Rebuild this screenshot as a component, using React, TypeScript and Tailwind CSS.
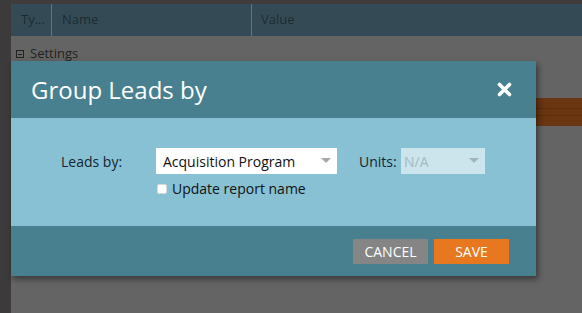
import React from "react";

export default function App() {
  const font = { fontFamily: '"Open Sans", "Noto Sans", sans-serif' };
  return (
    <div className="relative w-[582px] h-[313px] overflow-hidden flex bg-[#646464]" style={font}>
      <div className="w-[11px] h-full bg-[#3d3a3c]" />
      <div className="flex-1 flex flex-col">
        <div className="h-[4px] bg-[#403c3e]" />
        <div className="h-[32px] bg-[#344b56] flex items-center text-[13px] text-[#1c2b33]">
          <div className="w-[41px] h-full flex items-center pl-[10px] border-r border-[#5d7682]">Ty...</div>
          <div className="w-[200px] h-full flex items-center pl-[10px] border-r border-[#5d7682]">Name</div>
          <div className="flex-1 h-full flex items-center pl-[9px]">Value</div>
        </div>
        <div className="h-[35px] flex items-center pl-[5px] pt-[1px] text-[13px] text-[#1f1f1f] gap-[6px]">
          <span className="w-[8px] h-[8px] border border-[#222] flex items-center justify-center">
            <span className="w-[4px] h-[1px] bg-[#222]" />
          </span>
          <span>Settings</span>
        </div>
        <div className="mt-[27px] h-[28px] bg-[#6a3511] flex flex-col justify-center gap-[6px]">
          <div className="h-[1px] bg-[#5a2c0e]" />
          <div className="h-[1px] bg-[#5a2c0e]" />
        </div>
      </div>

      <div className="absolute left-[11px] top-[61px] w-[525px] shadow-[2px_3px_6px_rgba(0,0,0,0.45)] flex flex-col">
        <div className="h-[57px] bg-[#48808f] flex items-center justify-between pl-[20px] pr-[24px]">
          <span className="text-white text-[24px] leading-none">Group Leads by</span>
          <svg width="15" height="15" viewBox="0 0 15 15">
            <path d="M2.5 2.5 L12.5 12.5 M12.5 2.5 L2.5 12.5" stroke="white" strokeWidth="3.6" strokeLinecap="round" />
          </svg>
        </div>
        <div className="h-[108px] bg-[#88c1d3] flex flex-col pt-[30px] pl-[50px] text-[14px] text-[#152530]">
          <div className="flex items-center h-[26px]">
            <span className="w-[95px]">Leads by:</span>
            <div className="w-[181px] h-[26px] bg-white flex items-center justify-between pl-[7px] pr-[6px] text-[#111]">
              <span>Acquisition Program</span>
              <svg width="10" height="6" viewBox="0 0 10 6"><path d="M0 0 L10 0 L5 5 Z" fill="#a8a8a8" /></svg>
            </div>
            <span className="ml-[22px] w-[42px]">Units:</span>
            <div className="w-[84px] h-[26px] bg-[#cce4ec] flex items-center justify-between pl-[3px] pr-[6px] text-[#a3b9c2]">
              <span>N/A</span>
              <svg width="10" height="6" viewBox="0 0 10 6"><path d="M0 0 L10 0 L5 5 Z" fill="#a3b3ba" /></svg>
            </div>
          </div>
          <div className="flex items-center mt-[4px] ml-[96px] gap-[5px] text-[#111]">
            <span className="w-[10px] h-[10px] bg-white rounded-[2px] border border-[#d8d8d8]" />
            <span>Update report name</span>
          </div>
        </div>
        <div className="h-[50px] bg-[#48808f] flex items-center justify-end pr-[27px] gap-[6px]">
          <div className="w-[75px] h-[25px] bg-[#858585] text-white text-[14px] flex items-center justify-center">CANCEL</div>
          <div className="w-[75px] h-[25px] bg-[#e8781f] text-white text-[14px] flex items-center justify-center">SAVE</div>
        </div>
      </div>
    </div>
  );
}
